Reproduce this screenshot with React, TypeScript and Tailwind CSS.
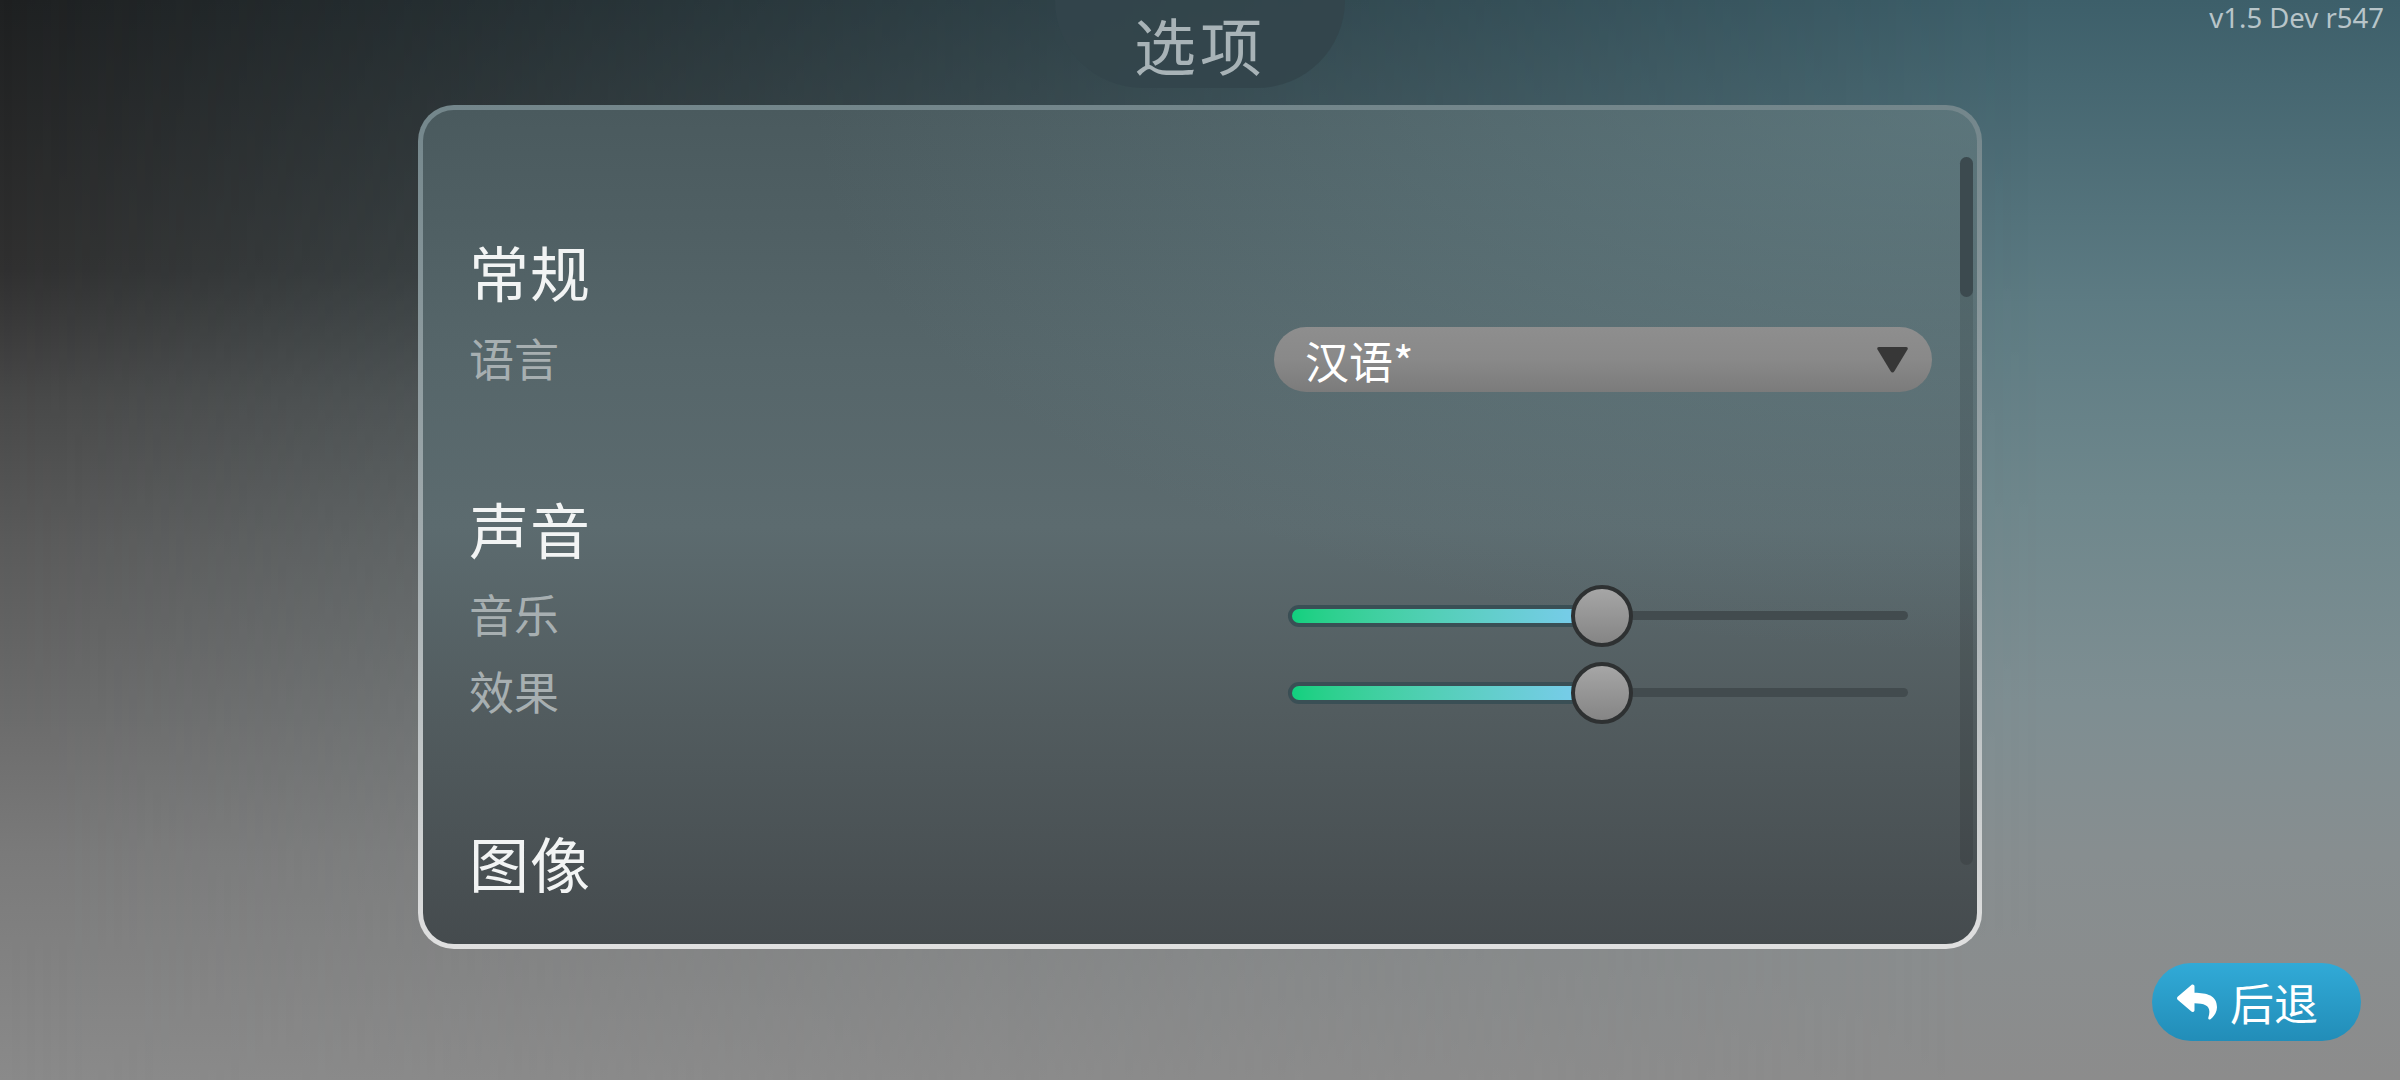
import { FaReply } from 'react-icons/fa';

const cjk = "font-['Noto_Sans_CJK_SC','Noto_Sans',sans-serif]";

function SectionTitle({ text }: { text: string }) {
  return (
    <div className={`h-[76px] flex items-center text-[60px] leading-none tracking-[1px] text-[#f2f4f4] ${cjk}`}>
      {text}
    </div>
  );
}

function SettingRow({ label, children }: { label: string; children: React.ReactNode }) {
  return (
    <div className="h-[77px] flex items-center justify-between">
      <span className={`mb-[5px] text-[45px] leading-none text-[#a7afb1] ${cjk}`}>{label}</span>
      {children}
    </div>
  );
}

function Dropdown({ value }: { value: string }) {
  return (
    <div className="w-[658px] h-[65px] rounded-full bg-gradient-to-b from-[#8e8e8e] via-[#898989] to-[#7b7b7b] flex items-center justify-between pl-[31px] pr-[23px]">
      <span className={`text-[44px] leading-none text-white ${cjk}`}>{value}</span>
      <svg width="33" height="29" viewBox="0 0 33 29">
        <path d="M3 2 H30 Q32.5 2 31.5 4.5 L18.5 26 Q16.5 29 14.5 26 L1.5 4.5 Q0.5 2 3 2 Z" fill="#373737" />
      </svg>
    </div>
  );
}

function Slider({ value }: { value: number }) {
  return (
    <div className="w-[658px] h-[62px] flex items-center pl-[14px] pr-[24px]">
      <div className="relative flex-1 h-full flex items-center">
        <div className="w-full h-[9px] rounded-full bg-[#424b4e]" />
        <div
          className="absolute left-0 top-1/2 -translate-y-1/2 h-[22px] rounded-full bg-[#3a4f55] p-[4px]"
          style={{ width: `${value * 100}%` }}
        >
          <div className="h-full rounded-full bg-gradient-to-r from-[#10d07e] to-[#7bcbf0]" />
        </div>
        <div
          className="absolute top-0 w-[62px] h-[62px] -ml-[27px] rounded-full border-[4px] border-[#2e3132] bg-gradient-to-b from-[#a6a6a6] to-[#858585]"
          style={{ left: `${value * 100}%` }}
        />
      </div>
    </div>
  );
}

export default function App() {
  return (
    <div className="relative w-[2400px] h-[1080px] overflow-hidden">
      {/* background layers */}
      <div className="absolute inset-0 bg-[linear-gradient(to_bottom,#1e2021_0%,#303030_25%,#484848_37%,#5a5a5a_50%,#6a6a6a_65%,#7a7a7a_79%,#8a8a8a_100%)]" />
      <div className="absolute inset-0 bg-[linear-gradient(to_bottom,#3d5f6a_0%,#5d7b83_28%,#6e878c_46%,#7e8e92_65%,#878e90_79%,#8c8c8c_100%)] [mask-image:linear-gradient(to_right,transparent_0%,rgba(0,0,0,0.6)_50%,black_85%)]" />

      <div className="relative h-full flex flex-col">
        {/* top bar */}
        <div className="h-[88px] grid grid-cols-[1fr_290px_1fr]">
          <div />
          <div className="rounded-b-[88px] bg-[#33454b]/90 flex items-center justify-center">
            <span className={`text-[62px] leading-none tracking-[4px] text-[#a8b3b7] ${cjk}`}>选项</span>
          </div>
          <div className="flex justify-end pr-[16px] pt-[1px]">
            <span className="text-[27.5px] leading-[34px] text-[#b8c5c9] font-['Noto_Sans',sans-serif]">v1.5 Dev r547</span>
          </div>
        </div>

        {/* options panel */}
        <div className="mt-[17px] ml-[418px] w-[1564px] h-[844px] rounded-[36px] p-[5px] bg-gradient-to-b from-[#73868b] via-[#a0aaad] to-[#e0e0e0]">
          <div className="w-full h-full rounded-[31px] overflow-hidden flex bg-[radial-gradient(ellipse_75%_65%_at_100%_0%,rgba(112,150,158,0.45)_0%,rgba(112,150,158,0)_100%),linear-gradient(to_bottom,#4a5a5e_0%,#56666a_30%,#5c6b6f_50%,#525c5f_72%,#454b4e_100%)]">
            <div className="flex-1 flex flex-col pl-[46px] pr-[28px] pt-[123px]">
              <SectionTitle text="常规" />
              <div className="mt-[12px]">
                <SettingRow label="语言">
                  <Dropdown value="汉语*" />
                </SettingRow>
              </div>

              <div className="mt-[92px]">
                <SectionTitle text="声音" />
              </div>
              <div className="mt-[11px]">
                <SettingRow label="音乐">
                  <Slider value={0.5} />
                </SettingRow>
                <SettingRow label="效果">
                  <Slider value={0.5} />
                </SettingRow>
              </div>

              <div className="mt-[93px]">
                <SectionTitle text="图像" />
              </div>
            </div>

            {/* scrollbar */}
            <div className="w-[13px] mr-[4px] mt-[47px] mb-[79px] rounded-full bg-black/10 flex flex-col">
              <div className="h-[140px] rounded-full bg-[#3c4a4f]" />
            </div>
          </div>
        </div>

        {/* back button */}
        <div className="mt-[14px] flex justify-end pr-[39px]">
          <button className="w-[209px] h-[78px] rounded-full bg-gradient-to-b from-[#31aad7] to-[#228db8] flex items-center pl-[25px] gap-[13px]">
            <FaReply className="w-[40px] h-[40px] text-white" />
            <span className={`text-[44px] leading-none text-white ${cjk}`}>后退</span>
          </button>
        </div>
      </div>
    </div>
  );
}
